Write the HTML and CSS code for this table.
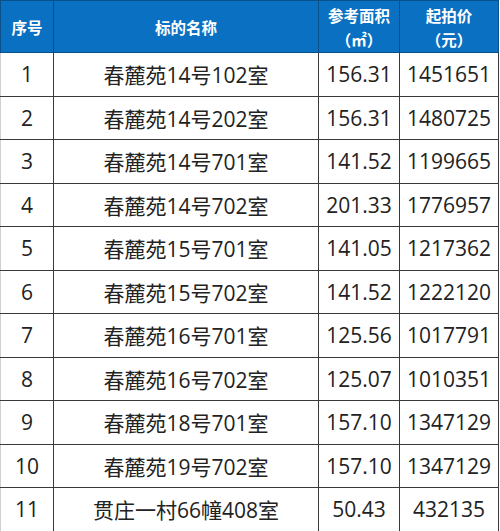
FILE: index.html
```html
<!DOCTYPE html>
<html lang="zh">
<head>
<meta charset="utf-8">
<link rel="stylesheet" href="styles.css">
</head>
<body>
<table class="tbl">
  <colgroup>
    <col class="c1"><col class="c2"><col class="c3"><col class="c4">
  </colgroup>
  <thead>
    <tr class="head">
      <th>序号</th>
      <th>标的名称</th>
      <th>参考面积<br><span class="unit">（㎡）</span></th>
      <th>起拍价<br><span class="unit">（元）</span></th>
    </tr>
  </thead>
  <tbody>
    <tr><td>1</td><td>春麓苑14号102室</td><td>156.31</td><td>1451651</td></tr>
    <tr><td>2</td><td>春麓苑14号202室</td><td>156.31</td><td>1480725</td></tr>
    <tr><td>3</td><td>春麓苑14号701室</td><td>141.52</td><td>1199665</td></tr>
    <tr><td>4</td><td>春麓苑14号702室</td><td>201.33</td><td>1776957</td></tr>
    <tr><td>5</td><td>春麓苑15号701室</td><td>141.05</td><td>1217362</td></tr>
    <tr><td>6</td><td>春麓苑15号702室</td><td>141.52</td><td>1222120</td></tr>
    <tr><td>7</td><td>春麓苑16号701室</td><td>125.56</td><td>1017791</td></tr>
    <tr><td>8</td><td>春麓苑16号702室</td><td>125.07</td><td>1010351</td></tr>
    <tr><td>9</td><td>春麓苑18号701室</td><td>157.10</td><td>1347129</td></tr>
    <tr><td>10</td><td>春麓苑19号702室</td><td>157.10</td><td>1347129</td></tr>
    <tr><td>11</td><td>贯庄一村66幢408室</td><td>50.43</td><td>432135</td></tr>
  </tbody>
</table>
</body>
</html>
```

FILE: styles.css
```css
html, body {
  margin: 0;
  padding: 0;
  background: #ffffff;
}
.tbl {
  border-collapse: collapse;
  table-layout: fixed;
  width: 498px;
  font-family: "Open Sans", "Noto Sans CJK SC", sans-serif;
}
.c1 { width: 53px; }
.c2 { width: 265px; }
.c3 { width: 81px; }
.c4 { width: 99px; }
.head th {
  background: #0a70c2;
  color: #ffffff;
  font-family: "Noto Sans CJK SC", sans-serif;
  font-weight: 700;
  font-size: 15.5px;
  line-height: 24px;
  height: 51px;
  padding: 0;
  border: 1px solid #0b4f8a;
  text-align: center;
  vertical-align: middle;
}
.unit {
  font-weight: 700;
}
td {
  height: 42.5px;
  padding: 0;
  border: 1px solid #3a3a3a;
  text-align: center;
  vertical-align: middle;
  font-size: 21px;
  color: #222222;
  white-space: nowrap;
}
td:first-child { border-left-color: #d0d0d0; }
```
